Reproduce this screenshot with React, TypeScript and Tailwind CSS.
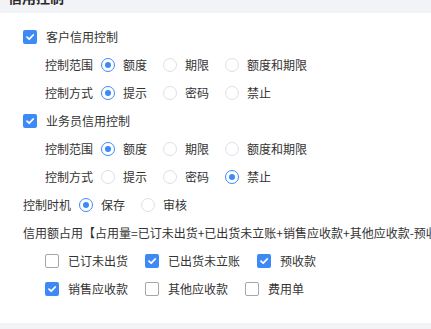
import React from "react";

const FONT = { fontFamily: '"Noto Sans CJK SC", "Noto Sans", sans-serif' };

function Radio({ checked }: { checked: boolean }) {
  return (
    <span
      className={`flex h-[14px] w-[14px] shrink-0 items-center justify-center rounded-full border bg-white ${
        checked ? "border-[#3d8af7]" : "border-[#dcdfe6]"
      }`}
    >
      {checked && <span className="h-[6px] w-[6px] rounded-full bg-[#3d8af7]" />}
    </span>
  );
}

function Checkbox({ checked }: { checked: boolean }) {
  if (!checked) {
    return <span className="h-[14px] w-[14px] shrink-0 rounded-[2px] border border-[#a6a6a6] bg-white" />;
  }
  return (
    <span className="flex h-[14px] w-[14px] shrink-0 items-center justify-center rounded-[2px] bg-[#3d8af7]">
      <svg width="10" height="10" viewBox="0 0 10 10" fill="none">
        <path d="M2 5.2 L4.2 7.2 L8.2 3" stroke="white" strokeWidth="1.8" strokeLinecap="round" strokeLinejoin="round" />
      </svg>
    </span>
  );
}

function RadioGroup({ label, options, value }: { label: string; options: string[]; value: number }) {
  return (
    <div className="flex h-[28px] items-center">
      <span className="mr-[8px]">{label}</span>
      {options.map((o, i) => (
        <label key={o} className="flex w-[62px] shrink-0 items-center gap-[8px] whitespace-nowrap">
          <Radio checked={i === value} />
          <span>{o}</span>
        </label>
      ))}
    </div>
  );
}

function CheckRow({ text, checked }: { text: string; checked: boolean }) {
  return (
    <div className="flex h-[28px] items-center gap-[9px]">
      <Checkbox checked={checked} />
      <span>{text}</span>
    </div>
  );
}

function CheckItem({ text, checked }: { text: string; checked: boolean }) {
  return (
    <label className="mr-[17px] flex items-center gap-[9px] whitespace-nowrap">
      <Checkbox checked={checked} />
      <span>{text}</span>
    </label>
  );
}

export default function App() {
  return (
    <div className="flex h-[329px] w-[431px] flex-col overflow-hidden bg-white text-[12px] leading-[16px] text-[#333]" style={FONT}>
      <div className="h-[13px] shrink-0 overflow-hidden bg-[#f2f3f7] pl-[8px]">
        <div className="mt-[-10px] text-[14px] font-semibold leading-[14px] text-[#2b2b2b]">信用控制</div>
      </div>

      <div className="flex-1 pl-[23px] pt-[10px]">
        <CheckRow text="客户信用控制" checked />
        <div className="pl-[22px]">
          <RadioGroup label="控制范围" options={["额度", "期限", "额度和期限"]} value={0} />
          <RadioGroup label="控制方式" options={["提示", "密码", "禁止"]} value={0} />
        </div>

        <CheckRow text="业务员信用控制" checked />
        <div className="pl-[22px]">
          <RadioGroup label="控制范围" options={["额度", "期限", "额度和期限"]} value={0} />
          <RadioGroup label="控制方式" options={["提示", "密码", "禁止"]} value={2} />
        </div>

        <RadioGroup label="控制时机" options={["保存", "审核"]} value={0} />

        <div className="flex h-[28px] items-center whitespace-nowrap">
          信用额占用【占用量=已订未出货+已出货未立账+销售应收款+其他应收款-预收款】
        </div>

        <div className="pl-[22px]">
          <div className="flex h-[28px] items-center">
            <CheckItem text="已订未出货" checked={false} />
            <CheckItem text="已出货未立账" checked />
            <CheckItem text="预收款" checked />
          </div>
          <div className="flex h-[28px] items-center">
            <CheckItem text="销售应收款" checked />
            <CheckItem text="其他应收款" checked={false} />
            <CheckItem text="费用单" checked={false} />
          </div>
        </div>
      </div>

      <div className="h-[6px] shrink-0 bg-[#f2f3f7]" />
    </div>
  );
}
